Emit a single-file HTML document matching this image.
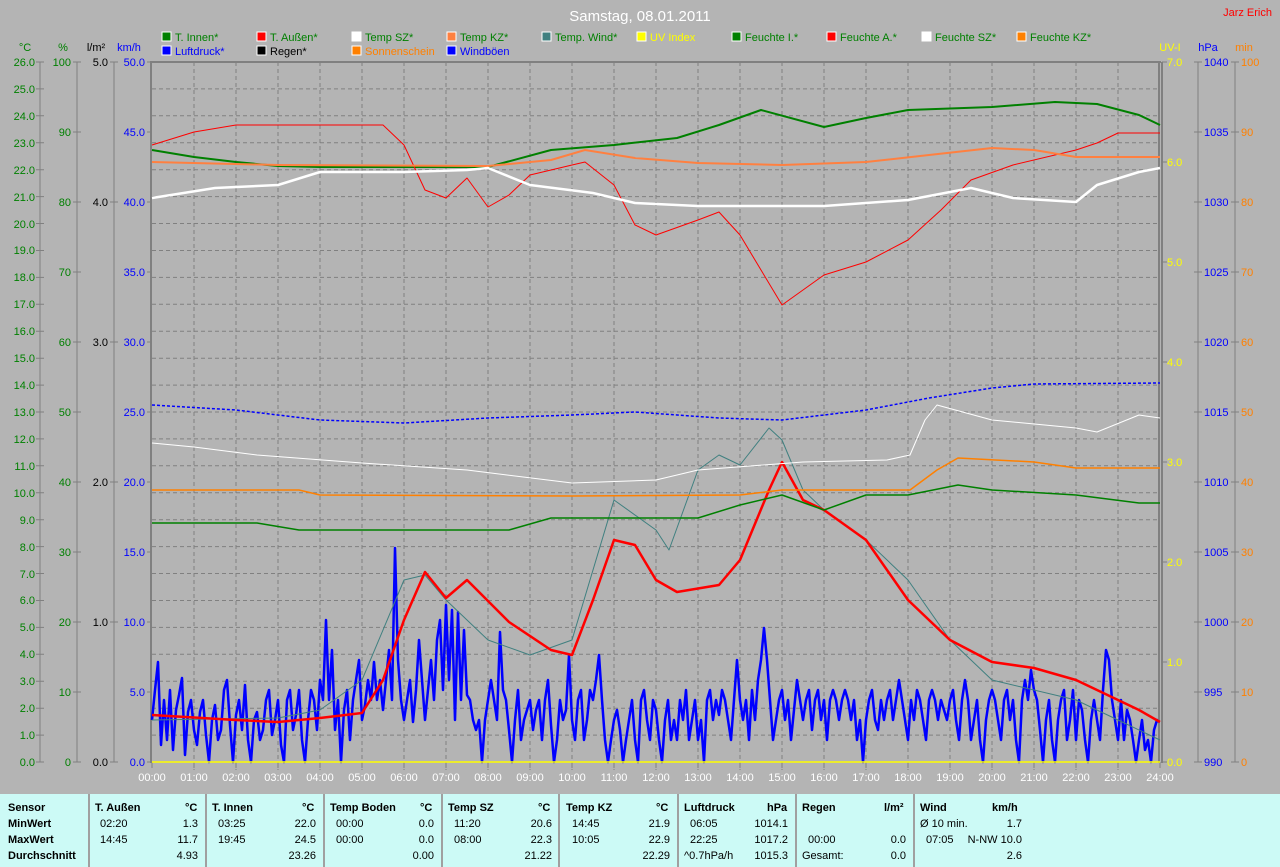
<!DOCTYPE html>
<html><head><meta charset="utf-8"><style>
body{margin:0;width:1280px;height:867px;background:#b4b4b4;font-family:"Liberation Sans",sans-serif;overflow:hidden;position:relative}
svg{position:absolute;left:0;top:0}
.tb{position:absolute;left:0;top:794px;width:1280px;height:73px;background:#ccfaf6}
.tb div{position:absolute;font-size:11px;color:#000}
.b{font-weight:bold}
.sep{position:absolute;top:0;width:2px;height:73px;background:#a0a0a0}
</style></head><body>
<svg width="1280" height="794" font-family="Liberation Sans, sans-serif" font-size="11">
<text x="640" y="21" fill="#fff" font-size="15" text-anchor="middle">Samstag, 08.01.2011</text>
<text x="1272" y="16" fill="#f00" text-anchor="end">Jarz Erich</text>
<g font-size="11">
<rect x="162" y="32" width="9" height="9" fill="#008000" stroke="#fff"/><text x="175" y="41" fill="#008000">T. Innen*</text>
<rect x="257" y="32" width="9" height="9" fill="#f00" stroke="#fff"/><text x="270" y="41" fill="#008000">T. Außen*</text>
<rect x="352" y="32" width="9" height="9" fill="#fff" stroke="#fff"/><text x="365" y="41" fill="#008000">Temp SZ*</text>
<rect x="447" y="32" width="9" height="9" fill="#ff8040" stroke="#fff"/><text x="460" y="41" fill="#008000">Temp KZ*</text>
<rect x="542" y="32" width="9" height="9" fill="#408080" stroke="#fff"/><text x="555" y="41" fill="#008000">Temp. Wind*</text>
<rect x="637" y="32" width="9" height="9" fill="#ff0" stroke="#fff"/><text x="650" y="41" fill="#ff0">UV Index</text>
<rect x="732" y="32" width="9" height="9" fill="#008000" stroke="#fff"/><text x="745" y="41" fill="#008000">Feuchte I.*</text>
<rect x="827" y="32" width="9" height="9" fill="#f00" stroke="#fff"/><text x="840" y="41" fill="#008000">Feuchte A.*</text>
<rect x="922" y="32" width="9" height="9" fill="#fff" stroke="#fff"/><text x="935" y="41" fill="#008000">Feuchte SZ*</text>
<rect x="1017" y="32" width="9" height="9" fill="#ff8000" stroke="#fff"/><text x="1030" y="41" fill="#008000">Feuchte KZ*</text>
<rect x="162" y="46" width="9" height="9" fill="#00f" stroke="#fff"/><text x="175" y="55" fill="#00f">Luftdruck*</text>
<rect x="257" y="46" width="9" height="9" fill="#000" stroke="#fff"/><text x="270" y="55" fill="#000">Regen*</text>
<rect x="352" y="46" width="9" height="9" fill="#ff8000" stroke="#fff"/><text x="365" y="55" fill="#ff8000">Sonnenschein</text>
<rect x="447" y="46" width="9" height="9" fill="#00f" stroke="#fff"/><text x="460" y="55" fill="#00f">Windböen</text>
</g>
<!-- axis headers -->
<text x="25" y="51" fill="#008000" text-anchor="middle">°C</text>
<text x="63" y="51" fill="#008000" text-anchor="middle">%</text>
<text x="96" y="51" fill="#000" text-anchor="middle">l/m²</text>
<text x="129" y="51" fill="#00f" text-anchor="middle">km/h</text>
<text x="1170" y="51" fill="#ff0" text-anchor="middle">UV-I</text>
<text x="1208" y="51" fill="#00f" text-anchor="middle">hPa</text>
<text x="1244" y="51" fill="#ff8000" text-anchor="middle">min</text>
<!-- grid -->
<g stroke="#808080" stroke-dasharray="4,3" stroke-width="1">
<path d="M152 88.9H1160M152 115.8H1160M152 142.8H1160M152 169.7H1160M152 196.6H1160M152 223.5H1160M152 250.5H1160M152 277.4H1160M152 304.3H1160M152 331.2H1160M152 358.2H1160M152 385.1H1160M152 412H1160M152 438.9H1160M152 465.8H1160M152 492.8H1160M152 519.7H1160M152 546.6H1160M152 573.5H1160M152 600.5H1160M152 627.4H1160M152 654.3H1160M152 681.2H1160M152 708.2H1160M152 735.1H1160"/>
<path d="M194 62V770M236 62V770M278 62V770M320 62V770M362 62V770M404 62V770M446 62V770M488 62V770M530 62V770M572 62V770M614 62V770M656 62V770M698 62V770M740 62V770M782 62V770M824 62V770M866 62V770M908 62V770M950 62V770M992 62V770M1034 62V770M1076 62V770M1118 62V770"/>
</g>
<path d="M151 61V763M150 62H1161M1159 62V763M1162 62V763" stroke="#808080" stroke-width="2" fill="none"/>
<!-- left axes -->
<g stroke="#808080" fill="none">
<path d="M40 62V762M77 62V762M114 62V762"/>
<path id="ct" d="M36 62h8M36 88.9h8M36 115.8h8M36 142.8h8M36 169.7h8M36 196.6h8M36 223.5h8M36 250.5h8M36 277.4h8M36 304.3h8M36 331.2h8M36 358.2h8M36 385.1h8M36 412h8M36 438.9h8M36 465.8h8M36 492.8h8M36 519.7h8M36 546.6h8M36 573.5h8M36 600.5h8M36 627.4h8M36 654.3h8M36 681.2h8M36 708.2h8M36 735.1h8M36 762h8"/>
<path d="M73 62h8M73 132h8M73 202h8M73 272h8M73 342h8M73 412h8M73 482h8M73 552h8M73 622h8M73 692h8M73 762h8"/>
<path d="M110 62h8M110 202h8M110 342h8M110 482h8M110 622h8M110 762h8"/>
<path d="M147 62h4M147 132h4M147 202h4M147 272h4M147 342h4M147 412h4M147 482h4M147 552h4M147 622h4M147 692h4M147 762h4"/>
<path d="M1198 62V762M1235 62V762"/>
<path d="M1162 62h5M1162 162h5M1162 262h5M1162 362h5M1162 462h5M1162 562h5M1162 662h5M1162 762h5"/>
<path d="M1194 62h8M1194 132h8M1194 202h8M1194 272h8M1194 342h8M1194 412h8M1194 482h8M1194 552h8M1194 622h8M1194 692h8M1194 762h8"/>
<path d="M1231 62h8M1231 132h8M1231 202h8M1231 272h8M1231 342h8M1231 412h8M1231 482h8M1231 552h8M1231 622h8M1231 692h8M1231 762h8"/>
</g>
<g fill="#008000" text-anchor="end">
<text x="35" y="66">26.0</text><text x="35" y="93">25.0</text><text x="35" y="120">24.0</text><text x="35" y="147">23.0</text><text x="35" y="174">22.0</text><text x="35" y="201">21.0</text><text x="35" y="228">20.0</text><text x="35" y="254">19.0</text><text x="35" y="281">18.0</text><text x="35" y="308">17.0</text><text x="35" y="335">16.0</text><text x="35" y="362">15.0</text><text x="35" y="389">14.0</text><text x="35" y="416">13.0</text><text x="35" y="443">12.0</text><text x="35" y="470">11.0</text><text x="35" y="497">10.0</text><text x="35" y="524">9.0</text><text x="35" y="551">8.0</text><text x="35" y="578">7.0</text><text x="35" y="604">6.0</text><text x="35" y="631">5.0</text><text x="35" y="658">4.0</text><text x="35" y="685">3.0</text><text x="35" y="712">2.0</text><text x="35" y="739">1.0</text><text x="35" y="766">0.0</text>
<text x="71" y="66">100</text><text x="71" y="136">90</text><text x="71" y="206">80</text><text x="71" y="276">70</text><text x="71" y="346">60</text><text x="71" y="416">50</text><text x="71" y="486">40</text><text x="71" y="556">30</text><text x="71" y="626">20</text><text x="71" y="696">10</text><text x="71" y="766">0</text>
</g>
<g fill="#000" text-anchor="end"><text x="108" y="66">5.0</text><text x="108" y="206">4.0</text><text x="108" y="346">3.0</text><text x="108" y="486">2.0</text><text x="108" y="626">1.0</text><text x="108" y="766">0.0</text></g>
<g fill="#00f" text-anchor="end"><text x="145" y="66">50.0</text><text x="145" y="136">45.0</text><text x="145" y="206">40.0</text><text x="145" y="276">35.0</text><text x="145" y="346">30.0</text><text x="145" y="416">25.0</text><text x="145" y="486">20.0</text><text x="145" y="556">15.0</text><text x="145" y="626">10.0</text><text x="145" y="696">5.0</text><text x="145" y="766">0.0</text></g>
<g fill="#ff0"><text x="1167" y="66">7.0</text><text x="1167" y="166">6.0</text><text x="1167" y="266">5.0</text><text x="1167" y="366">4.0</text><text x="1167" y="466">3.0</text><text x="1167" y="566">2.0</text><text x="1167" y="666">1.0</text><text x="1167" y="766">0.0</text></g>
<g fill="#00f"><text x="1204" y="66">1040</text><text x="1204" y="136">1035</text><text x="1204" y="206">1030</text><text x="1204" y="276">1025</text><text x="1204" y="346">1020</text><text x="1204" y="416">1015</text><text x="1204" y="486">1010</text><text x="1204" y="556">1005</text><text x="1204" y="626">1000</text><text x="1204" y="696">995</text><text x="1204" y="766">990</text></g>
<g fill="#ff8000"><text x="1241" y="66">100</text><text x="1241" y="136">90</text><text x="1241" y="206">80</text><text x="1241" y="276">70</text><text x="1241" y="346">60</text><text x="1241" y="416">50</text><text x="1241" y="486">40</text><text x="1241" y="556">30</text><text x="1241" y="626">20</text><text x="1241" y="696">10</text><text x="1241" y="766">0</text></g>
<!-- hour labels -->
<g fill="#fff" text-anchor="middle">
<text x="152" y="781">00:00</text><text x="194" y="781">01:00</text><text x="236" y="781">02:00</text><text x="278" y="781">03:00</text><text x="320" y="781">04:00</text><text x="362" y="781">05:00</text><text x="404" y="781">06:00</text><text x="446" y="781">07:00</text><text x="488" y="781">08:00</text><text x="530" y="781">09:00</text><text x="572" y="781">10:00</text><text x="614" y="781">11:00</text><text x="656" y="781">12:00</text><text x="698" y="781">13:00</text><text x="740" y="781">14:00</text><text x="782" y="781">15:00</text><text x="824" y="781">16:00</text><text x="866" y="781">17:00</text><text x="908" y="781">18:00</text><text x="950" y="781">19:00</text><text x="992" y="781">20:00</text><text x="1034" y="781">21:00</text><text x="1076" y="781">22:00</text><text x="1118" y="781">23:00</text><text x="1160" y="781">24:00</text>
</g>
<g stroke="#808080"><path d="M152 762v6M194 762v6M236 762v6M278 762v6M320 762v6M362 762v6M404 762v6M446 762v6M488 762v6M530 762v6M572 762v6M614 762v6M656 762v6M698 762v6M740 762v6M782 762v6M824 762v6M866 762v6M908 762v6M950 762v6M992 762v6M1034 762v6M1076 762v6M1118 762v6M1160 762v6"/></g>
<!-- data -->
<g fill="none" stroke-linejoin="round">
<polyline stroke="#00f" stroke-width="2.5" points="152,720 155,690 158,662 161,745 164,700 167,740 170,690 173,750 176,710 179,695 182,678 185,755 188,712 191,700 194,730 197,745 200,712 203,700 206,735 209,762 212,720 215,705 218,740 221,730 224,690 227,680 230,725 233,762 236,715 239,700 242,730 245,685 248,740 251,762 254,720 257,712 260,740 263,730 266,700 269,690 272,735 275,720 278,700 281,745 284,762 287,700 290,690 293,730 296,715 299,690 302,740 305,762 308,720 311,690 314,700 317,730 320,680 323,700 326,620 329,700 332,650 335,730 338,700 341,762 344,710 347,690 350,740 353,700 356,680 359,660 362,720 365,705 368,680 371,700 374,662 377,700 380,680 383,710 386,680 389,650 392,700 395,548 398,660 401,700 404,720 407,700 410,680 413,722 416,690 419,640 422,680 425,720 428,690 431,660 434,700 437,640 440,620 443,690 446,605 449,680 452,610 455,720 458,612 461,700 464,630 467,695 470,700 473,720 476,730 479,720 482,762 485,720 488,700 491,680 494,700 497,720 500,632 503,690 506,700 509,730 512,762 515,720 518,690 521,740 524,720 527,710 530,700 533,730 536,710 539,700 542,740 545,700 548,680 551,725 554,762 557,740 560,700 563,720 566,710 569,655 572,720 575,740 578,700 581,690 584,740 587,720 590,690 593,700 596,680 599,655 602,700 605,740 608,762 611,740 614,720 617,710 620,730 623,762 626,740 629,720 632,700 635,740 638,762 641,700 644,690 647,720 650,740 653,700 656,710 659,740 662,762 665,720 668,700 671,740 674,720 677,740 680,700 683,720 686,690 689,740 692,720 695,700 698,740 701,720 704,762 707,700 710,690 713,720 716,700 719,715 722,690 725,700 728,720 731,740 734,700 737,660 740,700 743,720 746,700 749,740 752,690 755,720 758,680 761,660 764,628 767,660 770,700 773,740 776,720 779,700 782,690 785,720 788,700 791,740 794,710 797,680 800,700 803,720 806,700 809,690 812,730 815,700 818,690 821,720 824,700 827,740 830,700 833,690 836,700 839,720 842,700 845,690 848,700 851,720 854,700 857,740 860,720 863,762 866,720 869,700 872,690 875,720 878,730 881,700 884,720 887,700 890,690 893,720 896,700 899,680 902,700 905,720 908,740 911,700 914,720 917,690 920,700 923,720 926,740 929,700 932,690 935,700 938,720 941,700 944,710 947,720 950,700 953,690 956,720 959,740 962,700 965,680 968,700 971,740 974,720 977,700 980,740 983,762 986,720 989,700 992,690 995,700 998,720 1001,740 1004,700 1007,690 1010,720 1013,700 1016,740 1019,762 1022,700 1025,680 1028,700 1031,670 1034,690 1037,700 1040,730 1043,762 1046,720 1049,700 1052,740 1055,762 1058,720 1061,700 1064,690 1067,740 1070,720 1073,690 1076,740 1079,700 1082,710 1085,740 1088,762 1091,720 1094,700 1097,720 1100,740 1103,690 1106,650 1109,660 1112,700 1115,720 1118,740 1121,700 1124,740 1127,710 1130,720 1133,740 1136,762 1139,740 1142,720 1145,750 1148,740 1151,762 1154,730 1157,720 1159,722"/>
<polyline stroke="#408080" stroke-width="1" points="152,720 278,718 320,710 362,680 404,580 425,575 446,600 488,640 530,655 572,640 614,500 656,530 669,550 698,470 719,455 740,465 769,428 782,440 803,490 824,510 866,540 908,580 950,640 992,680 1076,700 1118,720 1160,740"/>
<polyline stroke="#f00" stroke-width="2.5" points="152,715 236,720 278,722 320,718 362,713 383,680 404,620 425,572 446,598 467,580 509,622 551,650 572,655 593,600 614,540 635,545 656,580 677,592 719,585 740,560 769,490 782,462 803,500 824,510 866,540 908,600 950,640 992,662 1034,668 1076,680 1097,690 1139,710 1160,722"/>
<polyline stroke="#008000" stroke-width="2" points="152,150 194,157 236,162 278,166 320,167 488,167 551,150 614,145 677,138 719,125 761,110 824,127 866,118 908,110 992,107 1055,102 1097,104 1139,115 1160,125"/>
<polyline stroke="#008000" stroke-width="1.5" points="152,523 257,523 299,530 509,530 551,518 698,518 740,505 782,495 824,510 866,495 908,495 958,485 992,490 1076,495 1139,503 1160,503"/>
<polyline stroke="#f00" stroke-width="1" points="152,145 194,132 236,125 320,125 383,125 404,145 425,190 446,198 467,178 488,207 509,195 530,175 572,165 585,162 614,185 635,225 656,235 698,220 719,212 740,235 761,270 782,305 803,290 824,275 866,262 908,240 941,210 971,180 1013,165 1076,150 1097,143 1118,133 1160,133"/>
<polyline stroke="#ff8040" stroke-width="2" points="152,162 278,165 488,166 551,160 585,150 635,158 698,163 782,165 866,162 929,155 992,148 1034,150 1076,157 1160,157"/>
<polyline stroke="#fff" stroke-width="2.5" points="152,198 215,188 278,185 320,172 404,172 467,170 488,168 530,185 593,193 635,203 698,206 824,206 908,200 971,188 1013,198 1076,202 1097,185 1139,172 1160,168"/>
<polyline stroke="#00f" stroke-width="1.5" stroke-dasharray="3,2" points="152,405 236,410 320,420 404,423 488,418 572,415 635,412 719,418 782,420 866,410 929,398 992,388 1034,384 1160,383"/>
<polyline stroke="#fff" stroke-width="1" points="152,443 194,447 257,455 362,463 467,470 572,483 656,480 698,470 803,462 887,460 910,455 925,420 937,405 992,420 1076,428 1097,432 1139,415 1160,418"/>
<polyline stroke="#ff8000" stroke-width="1.5" points="152,490 299,490 320,495 572,496 740,495 782,490 910,490 937,470 958,458 1034,462 1076,468 1160,468"/>
<path d="M152 762H1160" stroke="#ff0" stroke-width="1.5"/>
</g>
</svg>
<div class="tb">
<div class="sep" style="left:88px"></div><div class="sep" style="left:205px"></div><div class="sep" style="left:323px"></div><div class="sep" style="left:441px"></div><div class="sep" style="left:558px"></div><div class="sep" style="left:677px"></div><div class="sep" style="left:795px"></div><div class="sep" style="left:913px"></div>
<div class="b" style="left:8px;top:8px">Sensor</div><div class="b" style="left:8px;top:24px">MinWert</div><div class="b" style="left:8px;top:40px">MaxWert</div><div class="b" style="left:8px;top:56px">Durchschnitt</div>
<div class="b" style="left:95px;top:8px">T. Außen</div><div class="b" style="left:185px;top:8px">°C</div>
<div style="left:100px;top:24px">02:20</div><div style="left:100px;top:40px">14:45</div><div style="left:160px;top:24px;width:38px;text-align:right">1.3</div><div style="left:160px;top:40px;width:38px;text-align:right">11.7</div><div style="left:160px;top:56px;width:38px;text-align:right">4.93</div>
<div class="b" style="left:212px;top:8px">T. Innen</div><div class="b" style="left:302px;top:8px">°C</div>
<div style="left:218px;top:24px">03:25</div><div style="left:218px;top:40px">19:45</div><div style="left:278px;top:24px;width:38px;text-align:right">22.0</div><div style="left:278px;top:40px;width:38px;text-align:right">24.5</div><div style="left:278px;top:56px;width:38px;text-align:right">23.26</div>
<div class="b" style="left:330px;top:8px">Temp Boden</div><div class="b" style="left:420px;top:8px">°C</div>
<div style="left:336px;top:24px">00:00</div><div style="left:336px;top:40px">00:00</div><div style="left:396px;top:24px;width:38px;text-align:right">0.0</div><div style="left:396px;top:40px;width:38px;text-align:right">0.0</div><div style="left:396px;top:56px;width:38px;text-align:right">0.00</div>
<div class="b" style="left:448px;top:8px">Temp SZ</div><div class="b" style="left:538px;top:8px">°C</div>
<div style="left:454px;top:24px">11:20</div><div style="left:454px;top:40px">08:00</div><div style="left:514px;top:24px;width:38px;text-align:right">20.6</div><div style="left:514px;top:40px;width:38px;text-align:right">22.3</div><div style="left:514px;top:56px;width:38px;text-align:right">21.22</div>
<div class="b" style="left:566px;top:8px">Temp KZ</div><div class="b" style="left:656px;top:8px">°C</div>
<div style="left:572px;top:24px">14:45</div><div style="left:572px;top:40px">10:05</div><div style="left:632px;top:24px;width:38px;text-align:right">21.9</div><div style="left:632px;top:40px;width:38px;text-align:right">22.9</div><div style="left:632px;top:56px;width:38px;text-align:right">22.29</div>
<div class="b" style="left:684px;top:8px">Luftdruck</div><div class="b" style="left:767px;top:8px">hPa</div>
<div style="left:690px;top:24px">06:05</div><div style="left:690px;top:40px">22:25</div><div style="left:684px;top:56px">^0.7hPa/h</div><div style="left:740px;top:24px;width:48px;text-align:right">1014.1</div><div style="left:740px;top:40px;width:48px;text-align:right">1017.2</div><div style="left:740px;top:56px;width:48px;text-align:right">1015.3</div>
<div class="b" style="left:802px;top:8px">Regen</div><div class="b" style="left:884px;top:8px">l/m²</div>
<div style="left:808px;top:40px">00:00</div><div style="left:802px;top:56px">Gesamt:</div><div style="left:868px;top:40px;width:38px;text-align:right">0.0</div><div style="left:868px;top:56px;width:38px;text-align:right">0.0</div>
<div class="b" style="left:920px;top:8px">Wind</div><div class="b" style="left:992px;top:8px">km/h</div>
<div style="left:920px;top:24px">Ø 10 min.</div><div style="left:926px;top:40px">07:05</div><div style="left:960px;top:24px;width:62px;text-align:right">1.7</div><div style="left:960px;top:40px;width:62px;text-align:right">N-NW 10.0</div><div style="left:960px;top:56px;width:62px;text-align:right">2.6</div>
</div>
</body></html>
